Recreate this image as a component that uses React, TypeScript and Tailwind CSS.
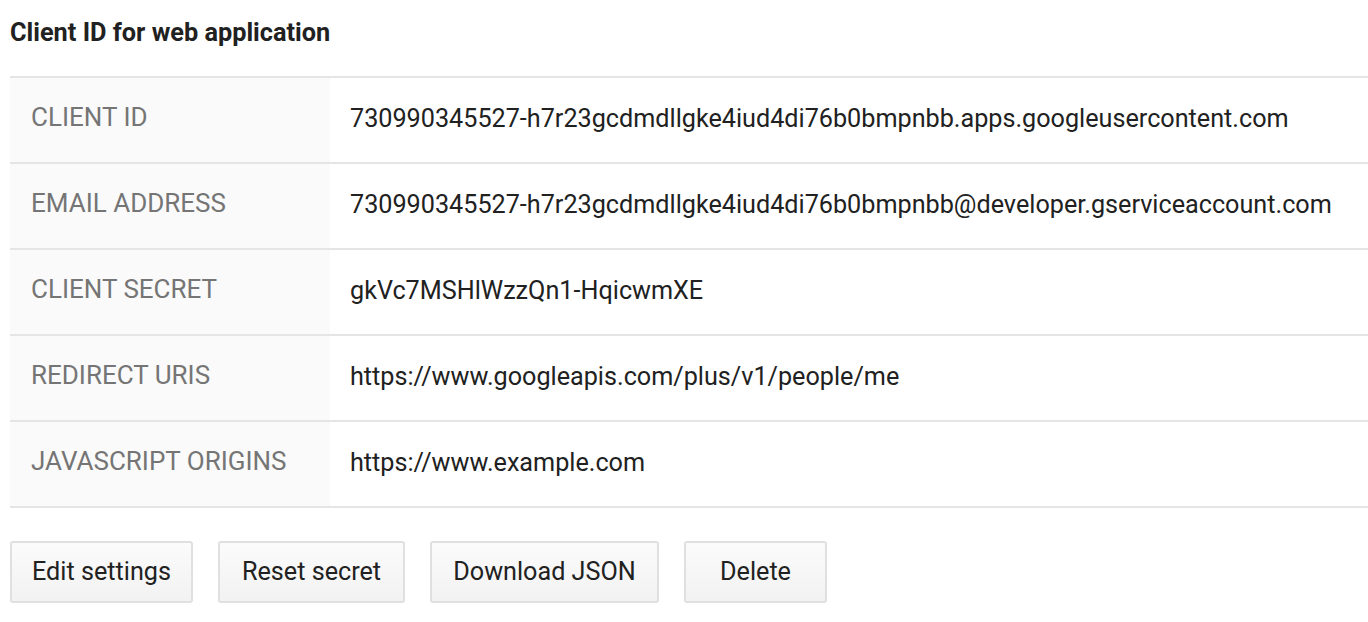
import React from 'react';

const rows = [
  { label: 'Client ID', value: '730990345527-h7r23gcdmdllgke4iud4di76b0bmpnbb.apps.googleusercontent.com' },
  { label: 'Email address', value: '730990345527-h7r23gcdmdllgke4iud4di76b0bmpnbb@developer.gserviceaccount.com' },
  { label: 'Client secret', value: 'gkVc7MSHlWzzQn1-HqicwmXE' },
  { label: 'Redirect URIs', value: 'https://www.googleapis.com/plus/v1/people/me' },
  { label: 'JavaScript origins', value: 'https://www.example.com' },
];

const buttons = [
  { label: 'Edit settings', width: 'w-[183px]' },
  { label: 'Reset secret', width: 'w-[187px]' },
  { label: 'Download JSON', width: 'w-[229px]' },
  { label: 'Delete', width: 'w-[143px]' },
];

export default function App() {
  return (
    <div className="min-h-screen bg-white pl-[10px] pt-[18px] font-['Roboto',sans-serif] text-[#212121]">
      <h2 className="text-[25.3px] font-bold leading-[30px]">Client ID for web application</h2>

      <div className="mt-[28px] border-t-2 border-[#e5e5e5]">
        {rows.map((row) => (
          <div key={row.label} className="flex h-[86px] border-b-2 border-[#e5e5e5]">
            <div className="w-[320px] shrink-0 bg-[#fafafa] pl-[21px] pt-[24px] text-[26px] leading-[30px] uppercase text-[#757575]">
              {row.label}
            </div>
            <div className="pl-[20px] pt-[26px] text-[25.2px] leading-[30px] text-[#212121] whitespace-nowrap">
              {row.value}
            </div>
          </div>
        ))}
      </div>

      <div className="mt-[33px] flex gap-[25px]">
        {buttons.map((b) => (
          <button
            key={b.label}
            className={`${b.width} h-[62px] rounded-[3px] border-2 border-[#e0e0e0] bg-gradient-to-b from-[#fbfbfb] to-[#f2f2f2] text-center text-[25.2px] text-[#212121]`}
          >
            {b.label}
          </button>
        ))}
      </div>
    </div>
  );
}
